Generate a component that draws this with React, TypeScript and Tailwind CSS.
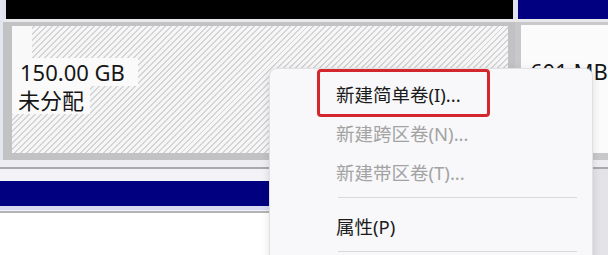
import React from "react";

const FONT = "font-['Noto_Sans','Noto_Sans_CJK_SC',sans-serif]";

function MenuItem({ label, disabled = false }: { label: string; disabled?: boolean }) {
  return (
    <div
      className={`h-[39px] flex items-center pl-[66px] text-[18.5px] ${
        disabled ? "text-[#a3a3a3]" : "text-[#1b1b1b]"
      }`}
    >
      {label}
    </div>
  );
}

function Separator() {
  return <div className="ml-[68px] mr-[15px] h-px bg-[#d9d9dc]" />;
}

export default function App() {
  return (
    <div className={`relative w-[608px] h-[255px] overflow-hidden bg-[#eef0f5] flex flex-col ${FONT}`}>
      {/* top disk row */}
      <div className="flex h-[160px]">
        <div className="w-[3px] bg-[#e3e6ee]" />

        {/* unallocated partition */}
        <div className="w-[512px] flex flex-col">
          <div className="h-[19px] pl-[3px] pr-[2px] bg-[#dfe2ec]">
            <div className="h-full bg-black" />
          </div>
          <div className="h-[3px] bg-[#e9e9ec]" />
          <div className="flex-1 bg-[#c2c2c4] pl-[9px] pr-[7px] pt-[4px] pb-[7px]">
            <div className="h-full bg-[repeating-linear-gradient(135deg,#f6f6f7_0px,#f6f6f7_2.8px,#d4d4d6_2.8px,#d4d4d6_4.2px)] flex flex-col items-start text-[22px] leading-[28px] text-[#161616]">
              <span className="h-[32px] w-[20px] bg-[#f9f9fa]" />
              <span className="bg-[#fafafa] pl-[8px] pr-[13px]">150.00 GB</span>
              <span className="bg-[#fafafa] pl-[6px] pr-[6px]">未分配</span>
            </div>
          </div>
        </div>

        {/* next partition */}
        <div className="flex-1 flex flex-col min-w-0">
          <div className="h-[19px] pl-[3px] bg-[#dfe2ec]">
            <div className="h-full bg-[#000080]" />
          </div>
          <div className="h-[3px] bg-[#e9e9ec]" />
          <div className="flex-1 bg-[#c8c8cb] pl-[6px] pt-[3px] pb-[7px]">
            <div className="h-full overflow-hidden whitespace-nowrap bg-[#fbfbfc] pl-[9px] pt-[32px] text-[22px] leading-[28px] text-[#161616]">
              601 MB
            </div>
          </div>
        </div>
      </div>

      {/* next disk row */}
      <div className="flex flex-1">
        <div className="w-[517px] flex flex-col">
          <div className="h-[7px] bg-[#eeeef2]" />
          <div className="h-[2px] bg-[#a9a9ac]" />
          <div className="h-[12px] bg-[#f3f3f7]" />
          <div className="h-[25px] bg-[#000080]" />
          <div className="h-[4px] bg-[#d9d9f2]" />
          <div className="h-px bg-[#f4f4f8]" />
          <div className="h-[2px] bg-[#b3b3b6]" />
          <div className="flex-1 bg-white" />
        </div>
        <div className="flex-1 flex flex-col">
          <div className="h-[7px] bg-[#eeeef2]" />
          <div className="h-[2px] bg-[#a9a9ac]" />
          <div className="flex-1 bg-[#e4e4e8]" />
        </div>
      </div>

      {/* context menu */}
      <div className="absolute left-[269px] top-[68px] w-[324px] h-[200px] bg-[#f8f8fa] border border-[#e1e1e5] rounded-[8px] shadow-[0_2px_8px_rgba(0,0,0,0.12)] pt-[6px]">
        <MenuItem label="新建简单卷(I)..." />
        <MenuItem label="新建跨区卷(N)..." disabled />
        <MenuItem label="新建带区卷(T)..." disabled />
        <div className="h-[5px]" />
        <Separator />
        <div className="h-[9px]" />
        <MenuItem label="属性(P)" />
        <div className="h-[5px]" />
        <Separator />

        {/* highlight annotation */}
        <div className="absolute left-[47px] top-0 w-[173px] h-[48px] border-[3px] border-[#d3262d] rounded-[4px]" />
      </div>
    </div>
  );
}
